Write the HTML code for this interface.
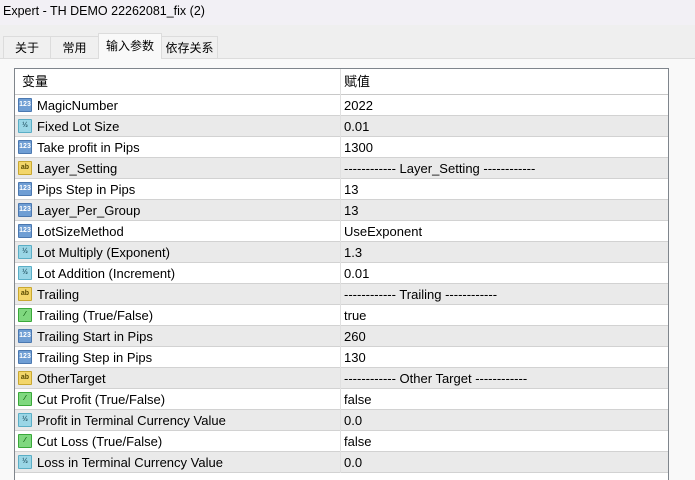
<!DOCTYPE html><html><head><style>
body{margin:0;width:695px;height:480px;overflow:hidden;background:#f9f9f9;font-family:"Liberation Sans","Noto Sans CJK SC",sans-serif;font-size:12px;color:#000;position:relative}
.title{position:absolute;left:0;top:0;width:695px;height:25px;background:#f2f0f5;font-size:12.5px;line-height:22px;padding-left:3px;box-sizing:border-box}
.tabs{position:absolute;left:0;top:25px;width:695px;height:33px;background:#efefef;border-bottom:1px solid #dcdcdc}
.tab{position:absolute;top:11px;height:22px;line-height:22px;text-align:center;border:1px solid #dcdcdc;border-bottom:none;background:#f0f0f0;box-sizing:border-box}
.tab.sel{top:8px;height:26px;background:#f9f9f9;line-height:24px}
.tbl{position:absolute;left:14px;top:68px;width:655px;height:412px;border:1px solid #7f858c;border-bottom:none;background:#fff;box-sizing:border-box;font-size:13px}
.row{position:absolute;left:0;width:653px;height:21px;border-bottom:1px solid #d2d2d2;box-sizing:border-box;line-height:21px}
.row.g{background:#eaeaea}
.n{position:absolute;left:22px}
.v{position:absolute;left:329px}
.div{position:absolute;left:325px;top:0;width:1px;height:404px;background:#e0e0e0}
.ic{position:absolute;left:3px;top:3px;width:14px;height:14px;border-radius:1px;font-size:7px;line-height:12px;text-align:center;font-weight:bold}
.i1{background:#6f9ed4;color:#fff;border:1px solid #4b78b0;box-sizing:border-box}
.i2{background:#9ad6e6;color:#2a5a6a;border:1px solid #5aaec6;box-sizing:border-box}
.i3{background:#f3d66a;color:#5a4a00;border:1px solid #c9a830;box-sizing:border-box}
.i4{background:#7fd87f;color:#0a5a0a;border:1px solid #3aa83a;box-sizing:border-box}
</style></head><body>
<div class="title">Expert - TH DEMO 22262081_fix (2)</div>
<div class="tabs">
<div class="tab" style="left:3px;width:48px">关于</div>
<div class="tab" style="left:50px;width:49px">常用</div>
<div class="tab sel" style="left:98px;width:64px">输入参数</div>
<div class="tab" style="left:161px;width:57px">依存关系</div>
</div>
<div class="tbl">
<div class="row" style="top:0;height:26px;line-height:26px;border-bottom:1px solid #c8c8c8"><span class="n" style="left:7px">变量</span><span class="v">赋值</span></div>
<div class="row" style="top:26px"><span class="ic i1">123</span><span class="n">MagicNumber</span><span class="v">2022</span></div>
<div class="row g" style="top:47px"><span class="ic i2">½</span><span class="n">Fixed Lot Size</span><span class="v">0.01</span></div>
<div class="row" style="top:68px"><span class="ic i1">123</span><span class="n">Take profit in Pips</span><span class="v">1300</span></div>
<div class="row g" style="top:89px"><span class="ic i3">ab</span><span class="n">Layer_Setting</span><span class="v">------------ Layer_Setting ------------</span></div>
<div class="row" style="top:110px"><span class="ic i1">123</span><span class="n">Pips Step in Pips</span><span class="v">13</span></div>
<div class="row g" style="top:131px"><span class="ic i1">123</span><span class="n">Layer_Per_Group</span><span class="v">13</span></div>
<div class="row" style="top:152px"><span class="ic i1">123</span><span class="n">LotSizeMethod</span><span class="v">UseExponent</span></div>
<div class="row g" style="top:173px"><span class="ic i2">½</span><span class="n">Lot Multiply (Exponent)</span><span class="v">1.3</span></div>
<div class="row" style="top:194px"><span class="ic i2">½</span><span class="n">Lot Addition (Increment)</span><span class="v">0.01</span></div>
<div class="row g" style="top:215px"><span class="ic i3">ab</span><span class="n">Trailing</span><span class="v">------------ Trailing ------------</span></div>
<div class="row" style="top:236px"><span class="ic i4">⁄</span><span class="n">Trailing (True/False)</span><span class="v">true</span></div>
<div class="row g" style="top:257px"><span class="ic i1">123</span><span class="n">Trailing Start in Pips</span><span class="v">260</span></div>
<div class="row" style="top:278px"><span class="ic i1">123</span><span class="n">Trailing Step in Pips</span><span class="v">130</span></div>
<div class="row g" style="top:299px"><span class="ic i3">ab</span><span class="n">OtherTarget</span><span class="v">------------ Other Target ------------</span></div>
<div class="row" style="top:320px"><span class="ic i4">⁄</span><span class="n">Cut Profit (True/False)</span><span class="v">false</span></div>
<div class="row g" style="top:341px"><span class="ic i2">½</span><span class="n">Profit in Terminal Currency Value</span><span class="v">0.0</span></div>
<div class="row" style="top:362px"><span class="ic i4">⁄</span><span class="n">Cut Loss (True/False)</span><span class="v">false</span></div>
<div class="row g" style="top:383px"><span class="ic i2">½</span><span class="n">Loss in Terminal Currency Value</span><span class="v">0.0</span></div>
<div class="div"></div>
</div>
</body></html>
